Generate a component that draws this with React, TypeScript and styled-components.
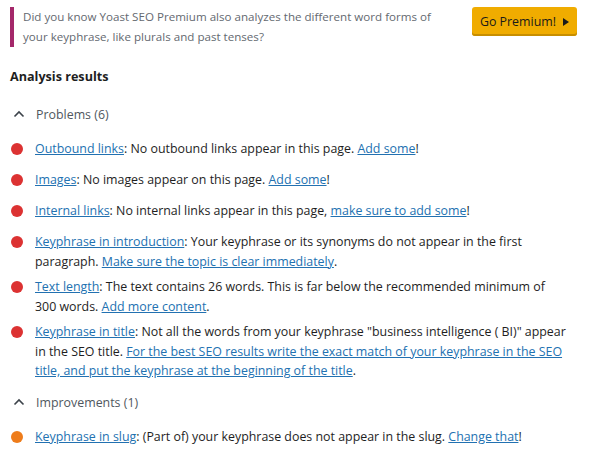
import React from 'react';
import styled, { createGlobalStyle } from 'styled-components';

const GlobalStyle = createGlobalStyle`
  html, body {
    margin: 0;
    padding: 0;
    background: #ffffff;
    overflow: hidden;
  }
  body {
    font-family: "Open Sans", "Noto Sans", sans-serif;
    font-size: 12.4px;
    color: #1e1e1e;
  }
`;

const Page = styled.div`
  width: 589px;
  padding: 7px 12px 0 10px;
  box-sizing: border-box;
`;

const Upsell = styled.div`
  display: flex;
  justify-content: space-between;
  align-items: flex-start;
  gap: 16px;
`;

const UpsellNote = styled.p`
  margin: 0;
  padding: 0 0 0 9px;
  border-left: 4px solid #a4286a;
  color: #646970;
  font-size: 11.6px;
  line-height: 20px;
  flex: 1;
`;

const PremiumButton = styled.a`
  display: inline-flex;
  align-items: center;
  gap: 7px;
  height: 29px;
  padding: 0 8px;
  box-sizing: border-box;
  background: #f0ac00;
  border-radius: 3px;
  box-shadow: inset 0 -2px 0 #c78e00;
  color: #1a1a1a;
  white-space: nowrap;
  font-size: 12.4px;
  text-decoration: none;
`;

const Arrow = styled.span`
  width: 0;
  height: 0;
  border-top: 4px solid transparent;
  border-bottom: 4px solid transparent;
  border-left: 6px solid #1a1a1a;
`;

const Heading = styled.h3`
  margin: 20px 0 0;
  font-size: 12.6px;
  font-weight: 700;
  line-height: 19.5px;
`;

const Section = styled.section`
  margin-top: 18px;

  & + & {
    margin-top: 12px;
  }
`;

const Toggle = styled.div`
  display: flex;
  align-items: center;
  gap: 11px;
  padding-left: 3px;
  color: #50575e;
  line-height: 19.5px;
  margin-bottom: 15px;
`;

const List = styled.ul`
  list-style: none;
  margin: 0;
  padding: 0 8px 0 0;
`;

const Item = styled.li`
  display: flex;
  align-items: flex-start;
  gap: 12px;
  min-height: 25px;
  margin-bottom: 6px;
  line-height: 19.5px;
`;

const Bullet = styled.span<{ $color: string }>`
  flex: none;
  width: 12px;
  height: 12px;
  margin: 4px 0 0 1px;
  border-radius: 50%;
  background: ${p => p.$color};
`;

const Text = styled.p`
  margin: 0;
  flex: 1;
`;

const Link = styled.a`
  color: #2271b1;
  text-decoration: underline;
`;

const Chevron = () => (
  <svg width="12" height="8" viewBox="0 0 12 8">
    <path d="M1.5 6.5 L6 2 L10.5 6.5" fill="none" stroke="#3c434a" strokeWidth="1.6" />
  </svg>
);

type Result = {
  title: string;
  body: React.ReactNode;
};

const problems: Result[] = [
  { title: 'Outbound links', body: <>: No outbound links appear in this page. <Link href="#">Add some</Link>!</> },
  { title: 'Images', body: <>: No images appear on this page. <Link href="#">Add some</Link>!</> },
  { title: 'Internal links', body: <>: No internal links appear in this page, <Link href="#">make sure to add some</Link>!</> },
  {
    title: 'Keyphrase in introduction',
    body: <>: Your keyphrase or its synonyms do not appear in the first paragraph. <Link href="#">Make sure the topic is clear immediately</Link>.</>,
  },
  {
    title: 'Text length',
    body: <>: The text contains 26 words. This is far below the recommended minimum of 300 words. <Link href="#">Add more content</Link>.</>,
  },
  {
    title: 'Keyphrase in title',
    body: (
      <>
        : Not all the words from your keyphrase "business intelligence ( BI)" appear in the SEO title.{' '}
        <Link href="#">For the best SEO results write the exact match of your keyphrase in the SEO title, and put the keyphrase at the beginning of the title</Link>.
      </>
    ),
  },
];

const improvements: Result[] = [
  { title: 'Keyphrase in slug', body: <>: (Part of) your keyphrase does not appear in the slug. <Link href="#">Change that</Link>!</> },
];

const ResultList: React.FC<{ items: Result[]; color: string }> = ({ items, color }) => (
  <List>
    {items.map(item => (
      <Item key={item.title}>
        <Bullet $color={color} />
        <Text>
          <Link href="#">{item.title}</Link>
          {item.body}
        </Text>
      </Item>
    ))}
  </List>
);

export default function App() {
  return (
    <Page>
      <GlobalStyle />
      <Upsell>
        <UpsellNote>
          Did you know Yoast SEO Premium also analyzes the different word forms of your keyphrase, like plurals and past tenses?
        </UpsellNote>
        <PremiumButton href="#">
          Go Premium! <Arrow />
        </PremiumButton>
      </Upsell>
      <Heading>Analysis results</Heading>
      <Section>
        <Toggle>
          <Chevron />
          Problems (6)
        </Toggle>
        <ResultList items={problems} color="#dc3232" />
      </Section>
      <Section>
        <Toggle>
          <Chevron />
          Improvements (1)
        </Toggle>
        <ResultList items={improvements} color="#ee7c1b" />
      </Section>
    </Page>
  );
}
